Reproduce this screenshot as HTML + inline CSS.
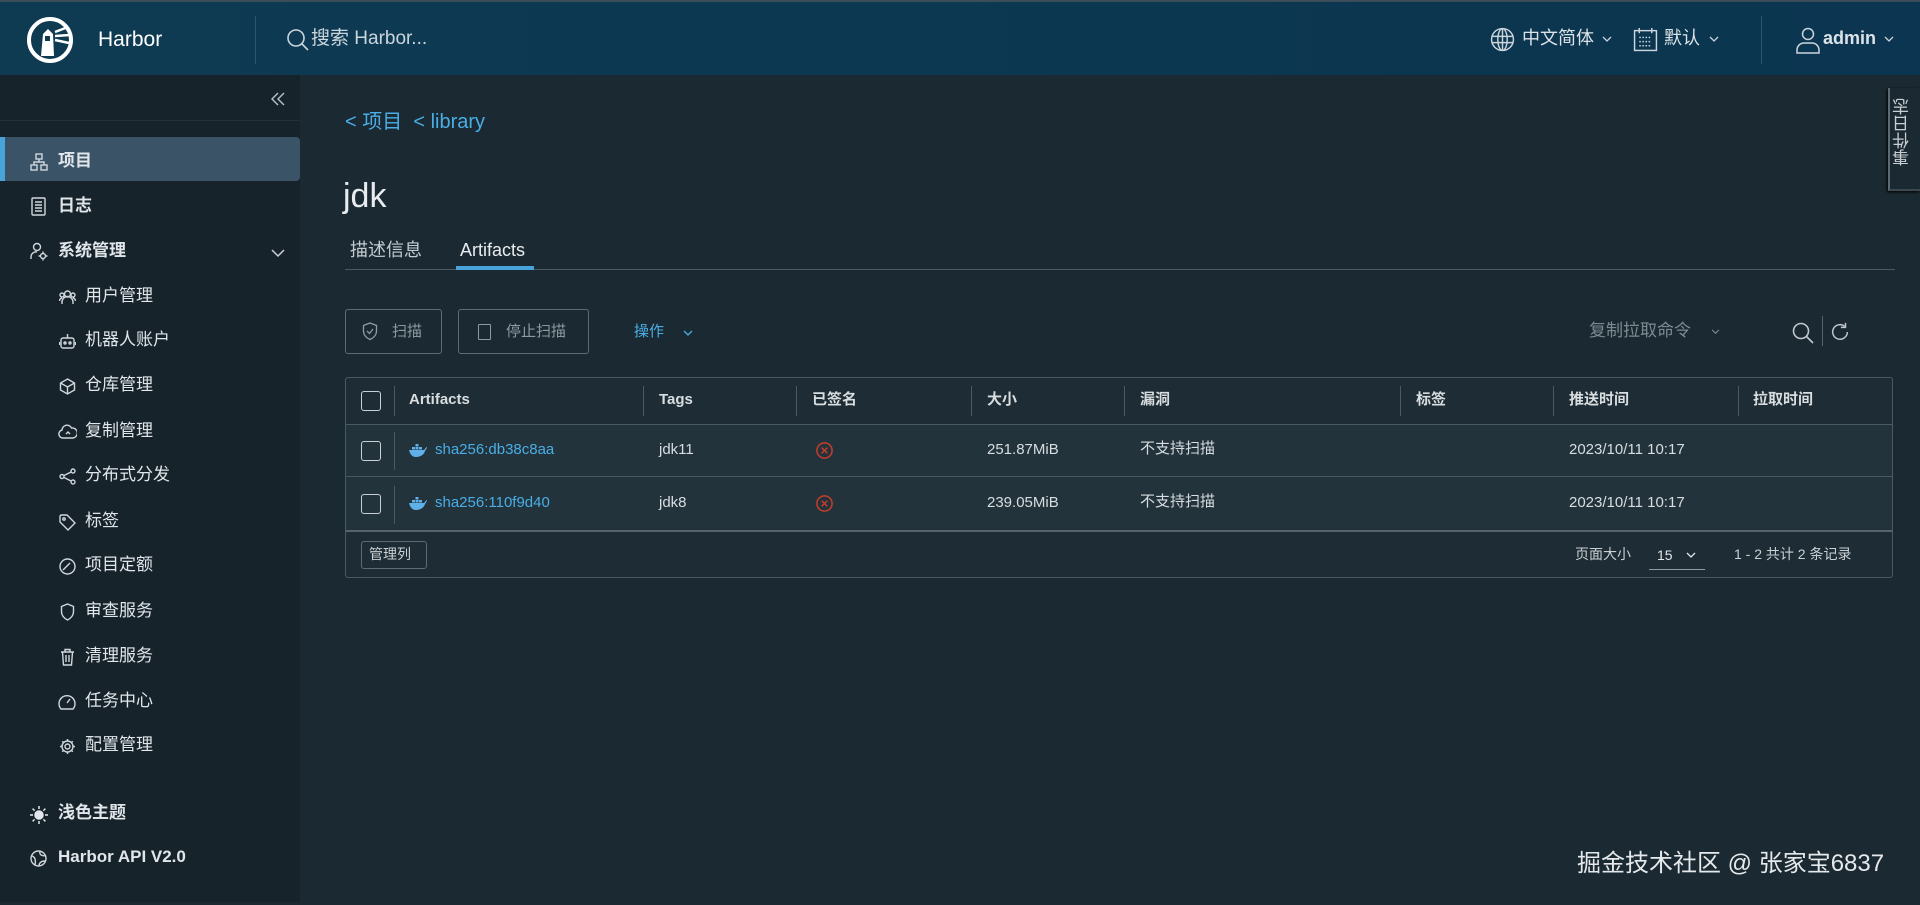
<!DOCTYPE html>
<html><head><meta charset="utf-8"><style>
*{margin:0;padding:0;box-sizing:border-box}
body{width:1920px;height:902px;overflow:hidden;background:#1b2a32;font-family:"Liberation Sans","Noto Sans CJK SC",sans-serif;color:#e9ecef;position:relative}
.abs{position:absolute}
header{position:absolute;left:0;top:0;width:1920px;height:75px;background:linear-gradient(90deg,#0e3a52,#0b3550);border-top:2px solid #3a4d58}
.side{position:absolute;left:0;top:75px;width:300px;height:827px;background:#17232b}
.t{position:absolute;white-space:nowrap;line-height:1.2}
.nav{font-size:17px;color:#e0e6ea}
.b{font-weight:bold}
.th{font-size:15px;font-weight:bold;color:#d8dde0;top:391px}
.td{font-size:15px;color:#d8dde0}
.cb{position:absolute;width:20px;height:20px;border:1.5px solid #c9d0d4;border-radius:3px}
.sep{position:absolute;width:1px;background:#4a5a63}
.ic{position:absolute;fill:none;stroke:#d0d7dc;stroke-width:1.4}
.sb{position:absolute;left:0;top:3px;width:300px;height:902px}
</style></head><body>
<header>
<svg class="abs" style="left:26px;top:14px" width="48" height="48" viewBox="0 0 48 48"><circle cx="24" cy="24" r="21" fill="none" stroke="#fff" stroke-width="4"/><path d="M15 40 L17 18 L22 13 L27 18 L28 40 Z" fill="#fff"/><path d="M29 16 L42 11 M29 20 L44 19 M29 24 L43 27" stroke="#fff" stroke-width="2.5"/><rect x="19" y="20" width="5" height="5" fill="#0e3a52"/></svg>
<div class="t" style="left:98px;top:25px;font-size:21px;color:#fff">Harbor</div>
<div class="abs" style="left:255px;top:14px;width:1px;height:48px;background:#2b5670"></div>
<svg class="abs" style="left:286px;top:26px" width="24" height="24" viewBox="0 0 24 24"><circle cx="10" cy="10" r="8" fill="none" stroke="#cbd5dc" stroke-width="1.6"/><path d="M16 16 L22 22" stroke="#cbd5dc" stroke-width="1.6"/></svg>
<div class="t" style="left:311px;top:26px;font-size:19px;color:#cbd5dc">搜索 Harbor...</div>
<svg class="abs" style="left:1490px;top:25px" width="25" height="25" viewBox="0 0 24 24" fill="none" stroke="#cbd5dc" stroke-width="1.4"><circle cx="12" cy="12" r="10.5"/><ellipse cx="12" cy="12" rx="4.5" ry="10.5"/><path d="M2 9h20M2 15h20M12 1.5v21"/></svg>
<div class="t" style="left:1522px;top:26px;font-size:18px;color:#dce3e8">中文简体</div>
<svg class="abs" style="left:1602px;top:34px" width="10" height="7" viewBox="0 0 10 7" fill="none" stroke="#cbd5dc" stroke-width="1.3"><path d="M1 1l4 4 4-4"/></svg>
<svg class="abs" style="left:1633px;top:25px" width="25" height="25" viewBox="0 0 24 24" fill="none" stroke="#cbd5dc" stroke-width="1.4"><rect x="1.5" y="3.5" width="21" height="19"/><path d="M6 1v5M18 1v5"/><path d="M6 10h12M6 14h12M6 18h12" stroke-dasharray="1.5 1.5"/></svg>
<div class="t" style="left:1664px;top:26px;font-size:18px;color:#dce3e8">默认</div>
<svg class="abs" style="left:1709px;top:34px" width="10" height="7" viewBox="0 0 10 7" fill="none" stroke="#cbd5dc" stroke-width="1.3"><path d="M1 1l4 4 4-4"/></svg>
<div class="abs" style="left:1761px;top:14px;width:1px;height:48px;background:#2b5670"></div>
<svg class="abs" style="left:1796px;top:25px" width="24" height="27" viewBox="0 0 24 27" fill="none" stroke="#cbd5dc" stroke-width="1.5"><circle cx="12" cy="7" r="5.5"/><path d="M1 26v-3a7 7 0 0 1 7-7h8a7 7 0 0 1 7 7v3z"/></svg>
<div class="t b" style="left:1823px;top:26px;font-size:18px;color:#dce3e8">admin</div>
<svg class="abs" style="left:1884px;top:34px" width="10" height="7" viewBox="0 0 10 7" fill="none" stroke="#cbd5dc" stroke-width="1.3"><path d="M1 1l4 4 4-4"/></svg>
</header>
<div class="side">
<svg class="abs" style="left:270px;top:16px" width="16" height="16" viewBox="0 0 16 16" fill="none" stroke="#b8c2c8" stroke-width="1.4"><path d="M8 2L2 8l6 6M14 2L8 8l6 6"/></svg>
<div class="abs" style="left:0;top:45px;width:300px;height:1px;background:#22313a"></div>
</div>
<div class="abs" style="left:0;top:137px;width:300px;height:44px;background:#3b5366;border-radius:0 4px 4px 0;border-left:5px solid #49a3d8"></div>
<div class="sb">
<svg class="ic" style="left:30px;top:150px" width="18" height="18" viewBox="0 0 18 18"><rect x="6" y="1" width="6" height="5"/><rect x="1" y="12" width="6" height="5"/><rect x="11" y="12" width="6" height="5"/><path d="M9 6v3M4 12V9h10v3"/></svg>
<div class="t nav b" style="left:58px;top:148px">项目</div>
<svg class="ic" style="left:31px;top:194px" width="15" height="19" viewBox="0 0 15 19"><rect x="1" y="1" width="13" height="17" rx="1"/><path d="M4 5h7M4 8h7M4 11h7M4 14h7"/></svg>
<div class="t nav b" style="left:58px;top:193px">日志</div>
<svg class="ic" style="left:30px;top:239px" width="18" height="19" viewBox="0 0 18 19"><circle cx="7" cy="5" r="3.5"/><path d="M1 17v-2a5 5 0 0 1 6-5"/><circle cx="13" cy="14" r="2.5"/><path d="M13 9.5v2M13 16.5v2M8.5 14h2M15.5 14h2"/></svg>
<div class="t nav b" style="left:58px;top:238px">系统管理</div>
<svg class="abs" style="left:271px;top:246px" width="14" height="9" viewBox="0 0 14 9" fill="none" stroke="#c9d0d4" stroke-width="1.5"><path d="M1 1l6 6 6-6"/></svg>
<svg class="ic" style="left:59px;top:286px" width="17" height="16" viewBox="0 0 17 16"><circle cx="8.5" cy="5" r="3"/><circle cx="3" cy="6" r="2"/><circle cx="14" cy="6" r="2"/><path d="M3 15v-2a5 5 0 0 1 11 0v2M0.5 12a3 3 0 0 1 2.5-3M16.5 12a3 3 0 0 0-2.5-3"/></svg>
<div class="t nav" style="left:85px;top:283px">用户管理</div>
<svg class="ic" style="left:59px;top:330px" width="17" height="17" viewBox="0 0 17 17"><rect x="2" y="5" width="13" height="10" rx="2"/><path d="M8.5 1v4M0.5 9v3M16.5 9v3"/><circle cx="6" cy="10" r="1"/><circle cx="11" cy="10" r="1"/></svg>
<div class="t nav" style="left:85px;top:327px">机器人账户</div>
<svg class="ic" style="left:59px;top:375px" width="17" height="17" viewBox="0 0 17 17"><path d="M8.5 1l7 4v7l-7 4-7-4V5z M1.5 5l7 4 7-4M8.5 9v7"/></svg>
<div class="t nav" style="left:85px;top:372px">仓库管理</div>
<svg class="ic" style="left:58px;top:421px" width="19" height="15" viewBox="0 0 19 15"><path d="M5 14a4 4 0 0 1-1-7.9A5 5 0 0 1 13.5 4 4 4 0 0 1 15 14z"/><path d="M8 10l2-2 2 2"/></svg>
<div class="t nav" style="left:85px;top:418px">复制管理</div>
<svg class="ic" style="left:59px;top:465px" width="17" height="17" viewBox="0 0 17 17"><circle cx="3" cy="8.5" r="2"/><circle cx="14" cy="3" r="2"/><circle cx="14" cy="14" r="2"/><path d="M5 7.5l7-3.5M5 9.5l7 3.5"/></svg>
<div class="t nav" style="left:85px;top:462px">分布式分发</div>
<svg class="ic" style="left:59px;top:511px" width="17" height="17" viewBox="0 0 17 17"><path d="M1 2v6l8 8 7-7-8-8H2z"/><circle cx="5" cy="5" r="1.2"/></svg>
<div class="t nav" style="left:85px;top:508px">标签</div>
<svg class="ic" style="left:59px;top:555px" width="17" height="17" viewBox="0 0 17 17"><circle cx="8.5" cy="8.5" r="7.5"/><path d="M4 12l7-7"/></svg>
<div class="t nav" style="left:85px;top:552px">项目定额</div>
<svg class="ic" style="left:60px;top:600px" width="15" height="18" viewBox="0 0 15 18"><path d="M7.5 1l6 2.5v5c0 4-3 7-6 8.5-3-1.5-6-4.5-6-8.5v-5z"/></svg>
<div class="t nav" style="left:85px;top:598px">审查服务</div>
<svg class="ic" style="left:60px;top:645px" width="15" height="18" viewBox="0 0 15 18"><path d="M1 4h13M5 4V1.5h5V4M2.5 4l1 13h8l1-13M6 7v7M9 7v7"/></svg>
<div class="t nav" style="left:85px;top:643px">清理服务</div>
<svg class="ic" style="left:58px;top:691px" width="18" height="17" viewBox="0 0 18 17"><path d="M3 15a8 8 0 1 1 12 0z"/><path d="M9 9l3-4"/></svg>
<div class="t nav" style="left:85px;top:688px">任务中心</div>
<svg class="ic" style="left:59px;top:735px" width="17" height="17" viewBox="0 0 17 17"><circle cx="8.5" cy="8.5" r="2.5"/><path d="M8.5 1v2.5M8.5 13.5V16M1 8.5h2.5M13.5 8.5H16M3.2 3.2l1.8 1.8M12 12l1.8 1.8M3.2 13.8L5 12M12 5l1.8-1.8"/><circle cx="8.5" cy="8.5" r="5.5"/></svg>
<div class="t nav" style="left:85px;top:732px">配置管理</div>
<svg class="abs" style="left:30px;top:803px" width="18" height="18" viewBox="0 0 18 18" fill="#e0e6ea" stroke="#e0e6ea" stroke-width="1.5"><circle cx="9" cy="9" r="4"/><path d="M9 0v3M9 15v3M0 9h3M15 9h3M2.6 2.6l2 2M13.4 13.4l2 2M2.6 15.4l2-2M13.4 4.6l2-2"/></svg>
<div class="t nav b" style="left:58px;top:800px">浅色主题</div>
<svg class="ic" style="left:30px;top:847px" width="17" height="17" viewBox="0 0 17 17"><circle cx="8.5" cy="8.5" r="7.5"/><path d="M2 6c3 1 4 4 3 9M10 1.5c-1 3 2 5 6 4M9 16c0-3 2-5 6-5"/></svg>
<div class="t nav b" style="left:58px;top:844px">Harbor API V2.0</div>
</div>

<div class="t" style="left:345px;top:110px;font-size:20px;color:#4aaee6">&lt; 项目 &nbsp;&lt; library</div>
<div class="t" style="left:343px;top:176px;font-size:34px;color:#e9ecef">jdk</div>
<div class="t" style="left:350px;top:240px;font-size:18px;color:#c4ccd1">描述信息</div>
<div class="t" style="left:460px;top:240px;font-size:18px;color:#e9ecef">Artifacts</div>
<div class="abs" style="left:345px;top:269px;width:1550px;height:1px;background:#4a5a63"></div>
<div class="abs" style="left:456px;top:266px;width:78px;height:4px;background:#49a3d8"></div>
<div class="abs" style="left:345px;top:309px;width:97px;height:45px;border:1px solid #5d6b73;border-radius:3px"></div>
<svg class="abs" style="left:362px;top:322px" width="16" height="19" viewBox="0 0 16 19" fill="none" stroke="#8e9aa1" stroke-width="1.3"><path d="M8 1l6.5 2.5v5.5c0 4-3 7-6.5 8.5C4.5 16 1.5 13 1.5 9V3.5z"/><path d="M5 9l2.5 2.5L11 7"/></svg>
<div class="t" style="left:392px;top:323px;font-size:15px;color:#8e9aa1">扫描</div>
<div class="abs" style="left:458px;top:309px;width:131px;height:45px;border:1px solid #5d6b73;border-radius:3px"></div>
<div class="abs" style="left:478px;top:324px;width:13px;height:16px;border:1.3px solid #8e9aa1;border-radius:1px"></div>
<div class="t" style="left:506px;top:323px;font-size:15px;color:#8e9aa1">停止扫描</div>
<div class="t" style="left:634px;top:323px;font-size:15px;color:#4aaee6">操作</div>
<svg class="abs" style="left:683px;top:330px" width="10" height="7" viewBox="0 0 10 7" fill="none" stroke="#4aaee6" stroke-width="1.3"><path d="M1 1l4 4 4-4"/></svg>
<div class="t" style="left:1589px;top:321px;font-size:17px;color:#7e8a91">复制拉取命令</div>
<svg class="abs" style="left:1711px;top:329px" width="9" height="6" viewBox="0 0 10 7" fill="none" stroke="#7e8a91" stroke-width="1.3"><path d="M1 1l4 4 4-4"/></svg>
<svg class="abs" style="left:1791px;top:321px" width="24" height="24" viewBox="0 0 24 24" fill="none" stroke="#c0c8cd" stroke-width="1.6"><circle cx="10" cy="10" r="7.5"/><path d="M15.5 15.5L22 22"/></svg>
<div class="abs" style="left:1822px;top:316px;width:1px;height:30px;background:#56646c"></div>
<svg class="abs" style="left:1829px;top:321px" width="22" height="22" viewBox="0 0 24 24" fill="none" stroke="#c0c8cd" stroke-width="1.6"><path d="M20 12a8 8 0 1 1-3-6.3"/><path d="M18 2v5h-5"/></svg>

<div class="abs" style="left:345px;top:377px;width:1548px;height:201px;border:1px solid #4a5a63;border-radius:3px;background:#1e2d35"></div>
<div class="abs" style="left:346px;top:424px;width:1546px;height:106px;background:#22333c"></div>
<div class="abs" style="left:346px;top:424px;width:1546px;height:1px;background:#4a5a63"></div>
<div class="abs" style="left:346px;top:476px;width:1546px;height:1px;background:#4a5a63"></div>
<div class="abs" style="left:346px;top:530px;width:1546px;height:2px;background:#56646c"></div>
<div class="cb" style="left:361px;top:391px"></div>
<div class="cb" style="left:361px;top:441px"></div>
<div class="cb" style="left:361px;top:494px"></div>
<div class="sep" style="left:394px;top:386px;height:30px"></div>
<div class="sep" style="left:394px;top:432px;height:38px"></div>
<div class="sep" style="left:394px;top:486px;height:38px"></div>
<div class="sep" style="left:643px;top:386px;height:30px"></div>
<div class="sep" style="left:796px;top:386px;height:30px"></div>
<div class="sep" style="left:971px;top:386px;height:30px"></div>
<div class="sep" style="left:1124px;top:386px;height:30px"></div>
<div class="sep" style="left:1400px;top:386px;height:30px"></div>
<div class="sep" style="left:1553px;top:386px;height:30px"></div>
<div class="sep" style="left:1738px;top:386px;height:30px"></div>
<div class="t th" style="left:409px">Artifacts</div>
<div class="t th" style="left:659px">Tags</div>
<div class="t th" style="left:812px">已签名</div>
<div class="t th" style="left:987px">大小</div>
<div class="t th" style="left:1140px">漏洞</div>
<div class="t th" style="left:1416px">标签</div>
<div class="t th" style="left:1569px">推送时间</div>
<div class="t th" style="left:1753px">拉取时间</div>

<svg class="abs" style="left:408px;top:442px" width="20" height="16" viewBox="0 0 20 16" fill="#5fb0e8"><path d="M1 8h15c1-1 2-3 3-3l0 1c-1 1-1 2-2 3-1 4-5 6-9 6-4 0-6-3-7-7z"/><rect x="4" y="5" width="3" height="2.5"/><rect x="7.5" y="5" width="3" height="2.5"/><rect x="11" y="5" width="3" height="2.5"/><rect x="7.5" y="2" width="3" height="2.5"/></svg>
<div class="t td" style="left:435px;top:441px;color:#4aaee6">sha256:db38c8aa</div>
<div class="t td" style="left:659px;top:441px">jdk11</div>
<svg class="abs" style="left:815px;top:441px" width="19" height="19" viewBox="0 0 20 20" fill="none" stroke="#c83c2b" stroke-width="1.6"><circle cx="10" cy="10" r="8"/><path d="M7 7l6 6M13 7l-6 6"/></svg>
<div class="t td" style="left:987px;top:441px">251.87MiB</div>
<div class="t td" style="left:1140px;top:440px">不支持扫描</div>
<div class="t td" style="left:1569px;top:441px">2023/10/11 10:17</div>

<svg class="abs" style="left:408px;top:495px" width="20" height="16" viewBox="0 0 20 16" fill="#5fb0e8"><path d="M1 8h15c1-1 2-3 3-3l0 1c-1 1-1 2-2 3-1 4-5 6-9 6-4 0-6-3-7-7z"/><rect x="4" y="5" width="3" height="2.5"/><rect x="7.5" y="5" width="3" height="2.5"/><rect x="11" y="5" width="3" height="2.5"/><rect x="7.5" y="2" width="3" height="2.5"/></svg>
<div class="t td" style="left:435px;top:494px;color:#4aaee6">sha256:110f9d40</div>
<div class="t td" style="left:659px;top:494px">jdk8</div>
<svg class="abs" style="left:815px;top:494px" width="19" height="19" viewBox="0 0 20 20" fill="none" stroke="#c83c2b" stroke-width="1.6"><circle cx="10" cy="10" r="8"/><path d="M7 7l6 6M13 7l-6 6"/></svg>
<div class="t td" style="left:987px;top:494px">239.05MiB</div>
<div class="t td" style="left:1140px;top:493px">不支持扫描</div>
<div class="t td" style="left:1569px;top:494px">2023/10/11 10:17</div>

<div class="abs" style="left:361px;top:541px;width:66px;height:28px;border:1px solid #5d6b73;border-radius:3px"></div>
<div class="t" style="left:369px;top:546px;font-size:14px;color:#c9d0d4">管理列</div>
<div class="t" style="left:1575px;top:546px;font-size:14px;color:#c9d0d4">页面大小</div>
<div class="abs" style="left:1649px;top:540px;width:56px;height:30px;border-bottom:1px solid #8e9aa1"></div>
<div class="t" style="left:1657px;top:547px;font-size:14px;color:#e0e6ea">15</div>
<svg class="abs" style="left:1686px;top:552px" width="10" height="7" viewBox="0 0 10 7" fill="none" stroke="#e0e6ea" stroke-width="1.3"><path d="M1 1l4 4 4-4"/></svg>
<div class="t" style="left:1734px;top:546px;font-size:14px;color:#c9d0d4">1 - 2 共计 2 条记录</div>

<div class="abs" style="left:1888px;top:88px;width:32px;height:103px;background:#1b2a32;border-left:2px solid #5d6b73;border-bottom:2px solid #3a4850;box-shadow:-1px 1px 3px #000"></div>
<div class="t" style="left:1893px;top:98px;font-size:17px;color:#c9d0d4;writing-mode:vertical-rl;transform:rotate(180deg)">事件日志</div>
<div class="t" style="left:1577px;top:850px;font-size:24px;color:#e6e9eb">掘金技术社区 @ 张家宝6837</div>
</body></html>
